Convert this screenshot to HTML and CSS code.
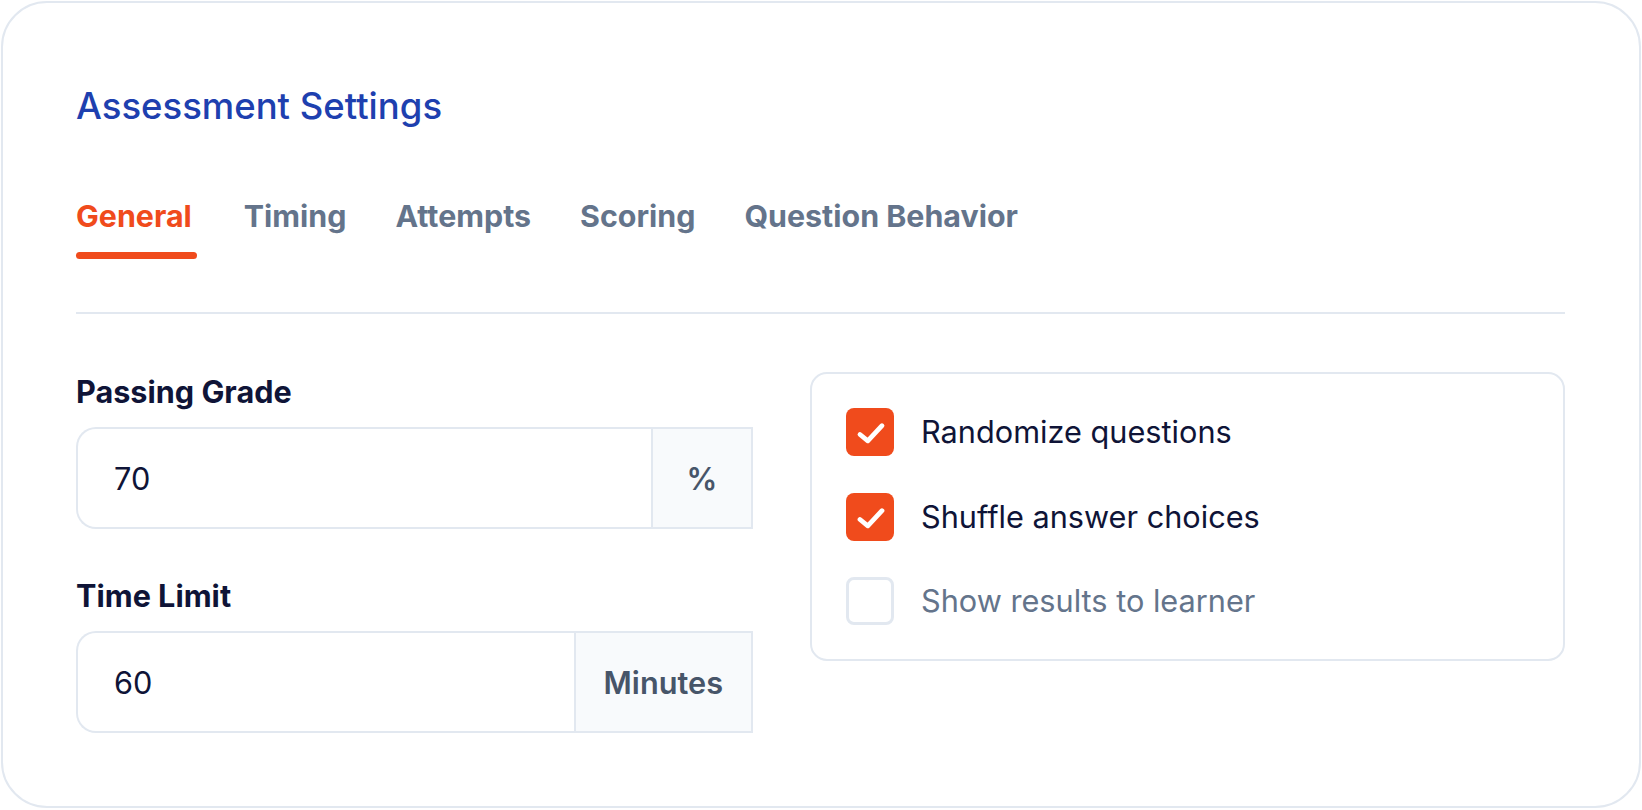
FILE: index.html
```html
<!DOCTYPE html>
<html lang="en">
<head>
<meta charset="utf-8">
<title>Assessment Settings</title>
<link rel="stylesheet" href="styles.css">
</head>
<body>
<section class="card">
  <h1 class="title">Assessment Settings</h1>
  <nav class="tabs">
    <a class="tab active">General</a>
    <a class="tab">Timing</a>
    <a class="tab">Attempts</a>
    <a class="tab">Scoring</a>
    <a class="tab">Question Behavior</a>
  </nav>
  <hr class="divider">
  <div class="grid">
    <div class="fields">
      <div class="field">
        <label class="label">Passing Grade</label>
        <div class="input-group">
          <div class="input">70</div>
          <div class="suffix suffix-pct">%</div>
        </div>
      </div>
      <div class="field">
        <label class="label">Time Limit</label>
        <div class="input-group">
          <div class="input">60</div>
          <div class="suffix">Minutes</div>
        </div>
      </div>
    </div>
    <div class="options">
      <div class="option">
        <span class="box checked"><svg viewBox="0 0 48 48" width="48" height="48"><polyline points="14,26.5 21.8,32.8 36,17.7" fill="none" stroke="#fff" stroke-width="4.8" stroke-linecap="round" stroke-linejoin="round"/></svg></span>
        <span class="option-text">Randomize questions</span>
      </div>
      <div class="option">
        <span class="box checked"><svg viewBox="0 0 48 48" width="48" height="48"><polyline points="14,26.5 21.8,32.8 36,17.7" fill="none" stroke="#fff" stroke-width="4.8" stroke-linecap="round" stroke-linejoin="round"/></svg></span>
        <span class="option-text">Shuffle answer choices</span>
      </div>
      <div class="option">
        <span class="box"></span>
        <span class="option-text muted">Show results to learner</span>
      </div>
    </div>
  </div>
</section>
</body>
</html>
```
FILE: styles.css
```css
* { box-sizing: border-box; }
html, body { margin: 0; background: #ffffff; }
body {
  padding: 1px;
  font-family: Inter, "Noto Sans", "Liberation Sans", sans-serif;
  color: #0f1437;
}
.card {
  border: 2px solid #e2e8f0;
  border-radius: 46px;
  padding: 79px 74px 70px 73px;
  min-height: 807px;
}
.title {
  margin: 0;
  font-size: 36.5px;
  line-height: 48px;
  font-weight: 500;
  color: #1e40af;
}
.tabs {
  display: flex;
  gap: 49px;
  margin-top: 66px;
}
.tab {
  display: block;
  font-size: 30.4px;
  line-height: 40px;
  font-weight: 700;
  color: #64748b;
}
.tab::after {
  content: "";
  display: block;
  height: 7px;
  margin-top: 16px;
  border-radius: 4px;
  background: transparent;
}
.tab.active { color: #f04b1c; margin-right: 3px; }
.tab.active::after {
  background: #f04b1c;
  width: calc(100% + 5px);
}
.divider {
  margin: 53px 0 0;
  border: 0;
  height: 2px;
  background: #e2e8f0;
}
.grid {
  display: grid;
  grid-template-columns: 677px 1fr;
  column-gap: 57px;
  margin-top: 58px;
  align-items: start;
}
.fields {
  display: flex;
  flex-direction: column;
  gap: 47px;
}
.label {
  display: block;
  font-size: 30.6px;
  line-height: 40px;
  font-weight: 700;
  color: #0f1437;
  margin-bottom: 15px;
}
.input-group {
  display: flex;
  height: 102px;
  border: 2px solid #e2e8f0;
  border-right: 0;
  border-radius: 20px 0 0 20px;
}
.input {
  flex: 1;
  display: flex;
  align-items: center;
  padding-left: 36px;
  font-size: 30.7px;
  color: #0f1437;
}
.suffix {
  display: flex;
  align-items: center;
  justify-content: center;
  margin: -2px 0;
  padding: 0 28px;
  background: #f8fafc;
  border: 2px solid #e2e8f0;
  font-size: 30.7px;
  font-weight: 600;
  color: #475569;
}
.suffix-pct { width: 102px; padding: 0; }
.options {
  border: 2px solid #e2e8f0;
  border-radius: 17px;
  padding: 34px 34px;
  display: flex;
  flex-direction: column;
  gap: 36.5px;
}
.option {
  display: flex;
  align-items: center;
  gap: 27px;
}
.box {
  flex: none;
  width: 48px;
  height: 48px;
  border-radius: 8px;
  border: 3.6px solid #e2e8f0;
  background: #fff;
  display: flex;
}
.box.checked {
  border: 0;
  background: #f04b1c;
}
.option-text {
  font-size: 30.7px;
  line-height: 40px;
  font-weight: 400;
  color: #0f1437;
}
.option-text.muted { color: #64748b; }
```
